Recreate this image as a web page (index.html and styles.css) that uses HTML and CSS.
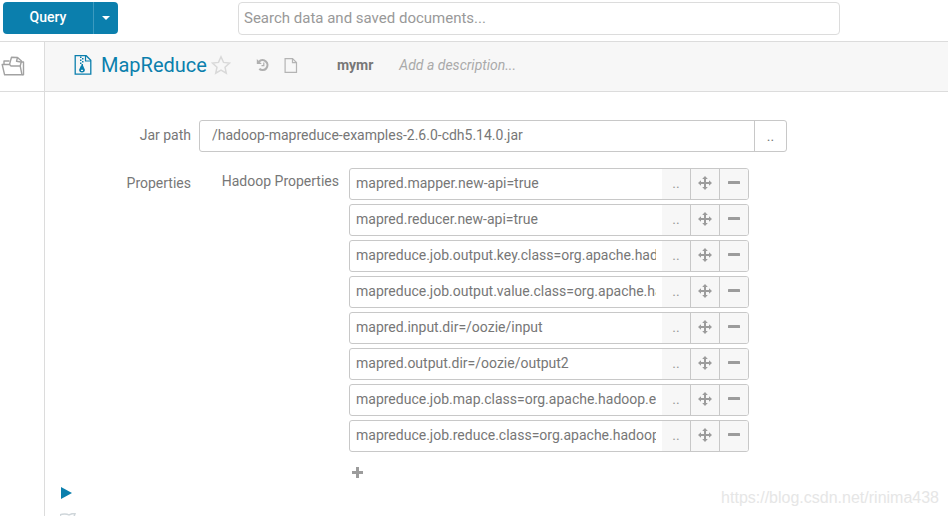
FILE: index.html
```html
<!DOCTYPE html>
<html lang="en">
<head>
    <meta charset="UTF-8">
    <meta name="viewport" content="width=device-width, initial-scale=1.0">
    <title>MapReduce - mymr</title>
    <link rel="stylesheet" href="styles.css">
</head>
<body>
    <svg class="sprite" aria-hidden="true">
        <symbol id="icon-move" viewBox="0 0 14 14">
            <path d="M7 0l2.800 3H8v3h3V4.200L14 7l-3 2.800V8H8v3h1.800L7 14l-2.800-3H6V8H3v1.800L0 7l3-2.800V6h3V3H4.200z"/>
        </symbol>
        <symbol id="icon-minus" viewBox="0 0 12 4">
            <rect width="12" height="3" rx="0.500"/>
        </symbol>
    </svg>

    <header class="top-nav">
        <div class="query-group">
            <button class="query-btn" type="button">Query</button>
            <button class="query-toggle" type="button" aria-label="More editors"><span class="caret"></span></button>
        </div>
        <input class="search" type="text" placeholder="Search data and saved documents..." aria-label="Search">
    </header>

    <div class="main">
        <nav class="sidebar">
            <button class="assist-btn" type="button" aria-label="Show assist">
                <svg width="24" height="20" viewBox="0 0 24 20" fill="none" stroke="#a2a2a2" stroke-width="1.400" stroke-linejoin="round">
                    <path d="M3.600 18.800L1.200 8.500h7.300l1.500 1.500h9.200l1.800 8.800z"/>
                    <path d="M3 8.500V5h5.500M21 18.800h1.500V6h-2.500"/>
                    <path d="M8.500 8.500L10.500 1.200l6 .300 4 3.500-1.300 5"/>
                    <path d="M16.500 1.500l-1 3.800 4.500.700"/>
                </svg>
            </button>
        </nav>

        <div class="workspace">
            <div class="title-bar">
                <a class="app-title" href="#">
                    <svg width="18" height="20" viewBox="0 0 18 20">
                        <path d="M1.200.700h11l4.600 4.600v13.900H1.200z" fill="none" stroke="#0b7fad" stroke-width="1.300"/>
                        <path d="M11.500 1v5H17" fill="none" stroke="#0b7fad" stroke-width="1.200"/>
                        <path d="M6 1.500h1.500V3H6zM8 3h1.500v1.500H8zM6 4.500h1.500V6H6zM8 6h1.500v1.500H8zM6 7.500h1.500V9H6zM7.500 9H9v2H7.500z" fill="#0b7fad"/>
                        <path d="M7 10.500h2l1.800 4c.400 1.800-1 3-2.800 3s-3.200-1.200-2.800-3z" fill="#0b7fad"/>
                        <rect x="7" y="14.800" width="2" height="1.200" fill="#f7f7f7"/>
                    </svg>
                    <span>MapReduce</span>
                </a>
                <button class="icon-btn star-btn" type="button" aria-label="Add to favorites">
                    <svg width="20" height="20" viewBox="0 0 20 20" fill="none" stroke="#d9d9d9" stroke-width="1.500">
                        <path d="M10 1.800l2.500 5.600 6 .700-4.500 4.100 1.300 6L10 15.200l-5.300 3 1.300-6-4.500-4.100 6-.700z"/>
                    </svg>
                </button>
                <button class="icon-btn history-btn" type="button" aria-label="History">
                    <svg width="14" height="14" viewBox="0 0 14 14" fill="none" stroke="#b0b0b0">
                        <path d="M3 3.700A4.900 4.900 0 1 1 3.300 10.800" stroke-width="2.200"/>
                        <path d="M.800 1v5h5z" fill="#b0b0b0" stroke="none"/>
                        <path d="M7.800 4.500v3.200H5.500" stroke-width="1.200"/>
                    </svg>
                </button>
                <button class="icon-btn doc-btn" type="button" aria-label="New document">
                    <svg width="14" height="15" viewBox="0 0 14 15" fill="none" stroke="#b4b4b4" stroke-width="1.200">
                        <path d="M1.100.600h7.400l4 4v9.800H1.100z"/>
                        <path d="M8.500.600v4h4"/>
                    </svg>
                </button>
                <span class="doc-name">mymr</span>
                <span class="doc-description">Add a description...</span>
            </div>

            <form class="snippet">
                <div class="form-row">
                    <label class="form-label" for="jar-path">Jar path</label>
                    <div class="jar-group">
                        <input id="jar-path" class="jar-input" type="text" value="/hadoop-mapreduce-examples-2.6.0-cdh5.14.0.jar">
                        <button class="jar-browse" type="button" aria-label="Browse">..</button>
                    </div>
                </div>

                <div class="form-row">
                    <span class="form-label">Properties</span>
                    <div class="properties">
                        <span class="properties-label" id="hadoop-label">Hadoop Properties</span>
                        <div class="property-list">
                            <div class="property">
                                <input type="text" aria-labelledby="hadoop-label" value="mapred.mapper.new-api=true">
                                <button class="browse" type="button">..</button>
                                <button type="button" aria-label="Move"><svg class="move"><use href="#icon-move"/></svg></button>
                                <button type="button" aria-label="Remove"><svg class="minus"><use href="#icon-minus"/></svg></button>
                            </div>
                            <div class="property">
                                <input type="text" aria-labelledby="hadoop-label" value="mapred.reducer.new-api=true">
                                <button class="browse" type="button">..</button>
                                <button type="button" aria-label="Move"><svg class="move"><use href="#icon-move"/></svg></button>
                                <button type="button" aria-label="Remove"><svg class="minus"><use href="#icon-minus"/></svg></button>
                            </div>
                            <div class="property">
                                <input type="text" aria-labelledby="hadoop-label" value="mapreduce.job.output.key.class=org.apache.hadoop.io.Text">
                                <button class="browse" type="button">..</button>
                                <button type="button" aria-label="Move"><svg class="move"><use href="#icon-move"/></svg></button>
                                <button type="button" aria-label="Remove"><svg class="minus"><use href="#icon-minus"/></svg></button>
                            </div>
                            <div class="property">
                                <input type="text" aria-labelledby="hadoop-label" value="mapreduce.job.output.value.class=org.apache.hadoop.io.IntWritable">
                                <button class="browse" type="button">..</button>
                                <button type="button" aria-label="Move"><svg class="move"><use href="#icon-move"/></svg></button>
                                <button type="button" aria-label="Remove"><svg class="minus"><use href="#icon-minus"/></svg></button>
                            </div>
                            <div class="property">
                                <input type="text" aria-labelledby="hadoop-label" value="mapred.input.dir=/oozie/input">
                                <button class="browse" type="button">..</button>
                                <button type="button" aria-label="Move"><svg class="move"><use href="#icon-move"/></svg></button>
                                <button type="button" aria-label="Remove"><svg class="minus"><use href="#icon-minus"/></svg></button>
                            </div>
                            <div class="property">
                                <input type="text" aria-labelledby="hadoop-label" value="mapred.output.dir=/oozie/output2">
                                <button class="browse" type="button">..</button>
                                <button type="button" aria-label="Move"><svg class="move"><use href="#icon-move"/></svg></button>
                                <button type="button" aria-label="Remove"><svg class="minus"><use href="#icon-minus"/></svg></button>
                            </div>
                            <div class="property">
                                <input type="text" aria-labelledby="hadoop-label" value="mapreduce.job.map.class=org.apache.hadoop.examples">
                                <button class="browse" type="button">..</button>
                                <button type="button" aria-label="Move"><svg class="move"><use href="#icon-move"/></svg></button>
                                <button type="button" aria-label="Remove"><svg class="minus"><use href="#icon-minus"/></svg></button>
                            </div>
                            <div class="property">
                                <input type="text" aria-labelledby="hadoop-label" value="mapreduce.job.reduce.class=org.apache.hadoop.examples">
                                <button class="browse" type="button">..</button>
                                <button type="button" aria-label="Move"><svg class="move"><use href="#icon-move"/></svg></button>
                                <button type="button" aria-label="Remove"><svg class="minus"><use href="#icon-minus"/></svg></button>
                            </div>
                            <button class="icon-btn add-btn" type="button" aria-label="Add property">
                                <svg width="11" height="11" viewBox="0 0 11 11" fill="#9c9c9c">
                                    <path d="M4 0h3v4h4v3H7v4H4V7H0V4h4z"/>
                                </svg>
                            </button>
                        </div>
                    </div>
                </div>

                <div class="run-bar">
                    <button class="icon-btn" type="button" aria-label="Execute">
                        <svg width="12" height="12" viewBox="0 0 12 12" fill="#0b7fad"><path d="M1 0l11 6-11 6z"/></svg>
                    </button>
                    <button class="icon-btn" type="button" aria-label="Clear">
                        <svg width="16" height="14" viewBox="0 0 16 14" fill="none" stroke="#cfd6da" stroke-width="1.500">
                            <path d="M0 2c2-1.500 7-1.500 9 0l3-1.300h3l-1 3-4 9H5z"/>
                        </svg>
                    </button>
                </div>
            </form>
        </div>
    </div>

    <div class="watermark">https://blog.csdn.net/rinima438</div>
</body>
</html>
```

FILE: styles.css
```css
* {
    box-sizing: border-box;
}
body {
    display: flex;
    flex-direction: column;
    height: 100vh;
    margin: 0;
    overflow: hidden;
    background: #fff;
    color: #777;
    font-family: Roboto, "Liberation Sans", sans-serif;
    font-size: 14px;
    line-height: 20px;
}
button,
input {
    margin: 0;
    font: inherit;
    color: inherit;
}
button {
    display: flex;
    align-items: center;
    justify-content: center;
    padding: 0;
    cursor: pointer;
}
svg {
    display: block;
}
.sprite {
    position: absolute;
    width: 0;
    height: 0;
}

/* Top navigation */
.top-nav {
    display: flex;
    flex: none;
    gap: 120px;
    height: 42px;
    padding: 2px 108px 0 3px;
    border-bottom: 1px solid #dcdcdc;
}
.query-group {
    display: flex;
    flex: none;
    height: 32px;
}
.query-btn,
.query-toggle {
    border: none;
    background: #0b7fad;
    color: #fff;
    font-weight: 500;
}
.query-btn {
    width: 90px;
    padding-bottom: 2px;
    border-radius: 4px 0 0 4px;
}
.query-toggle {
    width: 25px;
    border-left: 1px solid #3c9abf;
    border-radius: 0 4px 4px 0;
}
.caret {
    border: 4px solid transparent;
    border-top-color: #fff;
    border-bottom: none;
}
.search {
    flex: 1;
    min-width: 0;
    height: 33px;
    padding: 0 5px 2px;
    border: 1px solid #dcdcdc;
    border-radius: 4px;
    font-size: 15px;
}
.search::placeholder {
    color: #999;
}

/* Main area */
.main {
    display: flex;
    flex: 1;
    min-height: 0;
}
.sidebar {
    flex: none;
    width: 45px;
    border-right: 1px solid #dcdcdc;
}
.assist-btn {
    justify-content: flex-start;
    width: 44px;
    height: 50px;
    padding: 0 0 2px 1px;
    border: none;
    border-bottom: 1px solid #dcdcdc;
    background: none;
}
.workspace {
    flex: 1;
    min-width: 0;
}
.title-bar {
    display: flex;
    align-items: center;
    height: 50px;
    padding: 0 29px 3px;
    border-bottom: 1px solid #dcdcdc;
    background: #f7f7f7;
}
.app-title {
    display: flex;
    align-items: center;
    gap: 9px;
    color: #0b7fad;
    font-size: 20px;
    text-decoration: none;
}
.icon-btn {
    border: none;
    background: none;
}
.star-btn {
    margin-left: 4px;
}
.history-btn {
    margin-left: 25px;
}
.doc-btn {
    margin-left: 14px;
}
.doc-name {
    margin-left: 39px;
    font-weight: 700;
}
.doc-description {
    margin-left: 26px;
    color: #aaa;
    font-style: italic;
}

/* Snippet form */
.snippet {
    padding-top: 28px;
}
.form-row {
    display: flex;
    gap: 8px;
    margin-bottom: 16px;
}
.form-label {
    flex: none;
    width: 146px;
    padding-top: 5px;
    text-align: right;
}
.jar-group {
    display: flex;
    flex: 0 1 588px;
    height: 32px;
    border: 1px solid #c8c8c8;
    border-radius: 3px;
}
.jar-input {
    flex: 1;
    min-width: 0;
    padding: 0 12px 2px;
    border: none;
    background: none;
}
.jar-browse {
    width: 32px;
    border: none;
    border-left: 1px solid #c8c8c8;
    background: none;
}
.properties {
    display: flex;
    flex: 0 1 550px;
    gap: 10px;
    min-width: 0;
}
.properties-label {
    flex: none;
    width: 140px;
    padding-top: 3px;
    text-align: right;
}
.property-list {
    display: flex;
    flex: 1;
    flex-direction: column;
    gap: 4px;
    min-width: 0;
}
.property {
    display: flex;
    height: 32px;
    border: 1px solid #c8c8c8;
    border-radius: 3px;
    overflow: hidden;
}
.property input {
    flex: 1;
    min-width: 0;
    padding: 0 6px 2px;
    border: none;
    background: none;
}
.property button {
    flex: none;
    width: 29px;
    padding-bottom: 2px;
    border: none;
    border-left: 1px solid #c8c8c8;
    background: #f7f7f7;
    color: #999;
}
.property .browse {
    width: 28px;
    border-left: none;
}
.move {
    width: 14px;
    height: 14px;
    fill: #9c9c9c;
}
.minus {
    width: 12px;
    height: 4px;
    fill: #9c9c9c;
}
.add-btn {
    width: 17px;
    height: 25px;
    padding-top: 8px;
}
.run-bar {
    display: flex;
    flex-direction: column;
    align-items: flex-start;
    gap: 14px;
    margin-top: -10px;
    padding-left: 15px;
}

.watermark {
    position: absolute;
    right: 9px;
    bottom: 8px;
    color: #e6e6e6;
    font-family: "Liberation Sans", sans-serif;
    font-size: 16px;
}
```
